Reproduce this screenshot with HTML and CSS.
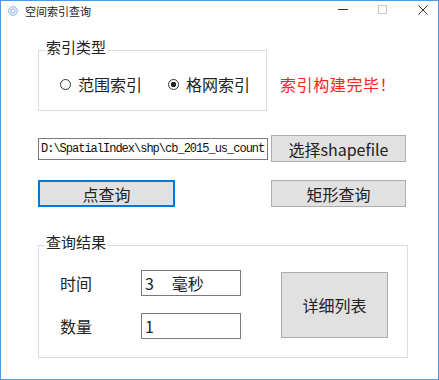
FILE: index.html
```html
<!DOCTYPE html>
<html lang="zh-CN">
<head>
    <meta charset="UTF-8">
    <title>空间索引查询</title>
    <link rel="stylesheet" href="styles.css">
</head>
<body>
    <div class="window">
        <div class="titlebar">
            <svg class="app-icon" viewBox="0 0 10 10">
                <circle cx="5" cy="5" r="4.5" fill="#d6e8f7" stroke="#9cc3e6"/>
                <circle cx="5" cy="5" r="2" fill="#ffffff" stroke="#9cc3e6"/>
            </svg>
            <span class="title">空间索引查询</span>
            <div class="controls">
                <svg viewBox="0 0 10 10"><path d="M0 4.5h10" stroke="#333"/></svg>
                <svg viewBox="0 0 10 10"><rect x="0.5" y="0.5" width="8" height="8" fill="none" stroke="#c8c8c8"/></svg>
                <svg viewBox="0 0 10 10"><path d="M0.5 0.5l9 9M9.5 0.5l-9 9" stroke="#333"/></svg>
            </div>
        </div>

        <div class="content">
            <div class="row">
                <fieldset class="group group-index">
                    <legend>索引类型</legend>
                    <div class="radios">
                        <label class="radio"><span class="dot"></span>范围索引</label>
                        <label class="radio checked"><span class="dot"></span>格网索引</label>
                    </div>
                </fieldset>
                <span class="status">索引构建完毕！</span>
            </div>

            <div class="row row-file">
                <input class="path" type="text" value="D:\SpatialIndex\shp\cb_2015_us_county_500k.shp">
                <button class="btn btn-file">选择shapefile</button>
            </div>

            <div class="row row-query">
                <button class="btn btn-point">点查询</button>
                <button class="btn btn-rect">矩形查询</button>
            </div>

            <fieldset class="group group-result">
                <legend>查询结果</legend>
                <div class="result">
                    <div class="fields">
                        <div class="field">
                            <span class="label">时间</span>
                            <input class="box" type="text" value="3     毫秒">
                        </div>
                        <div class="field">
                            <span class="label">数量</span>
                            <input class="box" type="text" value="1">
                        </div>
                    </div>
                    <button class="btn btn-detail">详细列表</button>
                </div>
            </fieldset>
        </div>
    </div>
</body>
</html>
```

FILE: styles.css
```css
body {
    margin: 0;
    font-family: "Noto Sans CJK SC", "Noto Sans", sans-serif;
    color: #222;
}

.window {
    width: 439px;
    height: 380px;
    box-sizing: border-box;
    border: 1px solid #4d9be6;
    background-color: #ffffff;
}

.titlebar {
    display: flex;
    align-items: center;
    height: 20px;
    padding: 0 10px 0 7px;
}

.app-icon {
    width: 10px;
    height: 10px;
}

.title {
    margin-left: 7px;
    font-size: 11px;
    line-height: 20px;
}

.controls {
    margin-left: auto;
    align-self: flex-start;
    padding-top: 4px;
    display: flex;
    gap: 30px;
}

.controls svg {
    width: 10px;
    height: 10px;
}

.content {
    padding: 18px 0 0 37px;
}

.row {
    display: flex;
}

/* Group boxes */
.group {
    margin: 0;
    border: 1px solid #dcdcdc;
    min-width: 0;
    box-sizing: border-box;
}

.group legend {
    margin-left: -15px;
    padding: 0 1px 6px;
    font-size: 15px;
    line-height: 16px;
}

.group-index {
    width: 229px;
    padding: 13px 0 16px 21px;
}

.radios {
    display: flex;
    align-items: center;
    height: 20px;
    font-size: 16px;
    line-height: 20px;
}

.radio {
    display: flex;
    align-items: center;
    gap: 7px;
}

.radio + .radio {
    margin-left: 26px;
}

.dot {
    width: 11px;
    height: 11px;
    box-sizing: border-box;
    border: 1px solid #333;
    border-radius: 50%;
}

.radio.checked .dot {
    background: radial-gradient(circle, #222 0 2.5px, transparent 3px);
}

.status {
    margin: 35px 0 0 13px;
    color: #f22;
    font-size: 16px;
    line-height: 20px;
    letter-spacing: 0.6px;
}

/* Buttons and text boxes */
.btn {
    padding: 0;
    background-color: #e1e1e1;
    border: 1px solid #adadad;
    font-family: "Noto Sans CJK SC", "Noto Sans", sans-serif;
    font-size: 16px;
    color: #222;
}

.row-file {
    margin-top: 24px;
    align-items: center;
}

.path {
    width: 230px;
    height: 22px;
    box-sizing: border-box;
    border: 1px solid #7a7a7a;
    padding: 0 2px;
    font-family: "Liberation Mono", monospace;
    font-size: 12px;
    letter-spacing: -1px;
    color: #111;
    outline: none;
}

.btn-file {
    margin-left: 3px;
    width: 135px;
    height: 27px;
}

.row-query {
    margin-top: 18px;
}

.btn-point {
    width: 137px;
    height: 27px;
    border: 2px solid #0078d7;
}

.btn-rect {
    margin-left: 96px;
    width: 135px;
    height: 27px;
}

.group-result {
    margin-top: 27px;
    width: 370px;
    padding: 14px 0 18px 21px;
}

.result {
    display: flex;
    align-items: center;
}

.fields {
    display: flex;
    flex-direction: column;
    gap: 17px;
}

.field {
    display: flex;
    align-items: center;
}

.label {
    width: 81px;
    font-size: 16px;
}

.box {
    width: 100px;
    height: 26px;
    box-sizing: border-box;
    border: 1px solid #7a7a7a;
    padding: 0 3px;
    font-family: "Noto Sans CJK SC", "Noto Sans", sans-serif;
    font-size: 16px;
    color: #222;
    white-space: pre;
    outline: none;
}

.btn-detail {
    margin-left: 40px;
    width: 107px;
    height: 66px;
}
```
